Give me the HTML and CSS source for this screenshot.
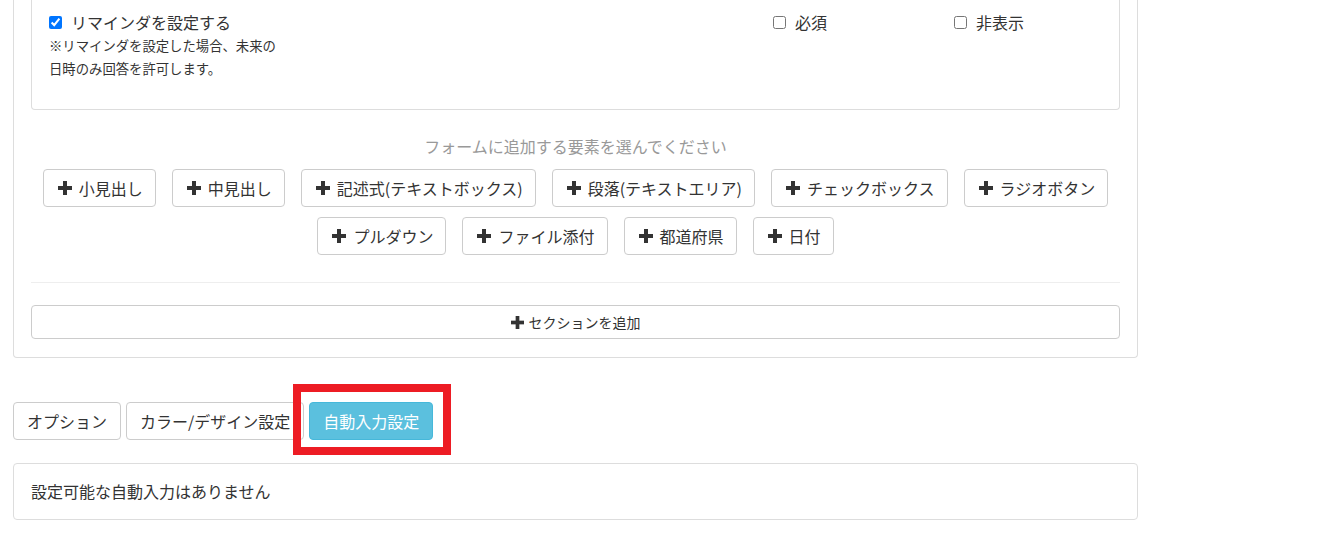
FILE: index.html
```html
<!DOCTYPE html>
<html lang="ja">
<head>
<meta charset="utf-8">
<title>フォーム編集</title>
<link rel="stylesheet" href="styles.css">
</head>
<body>
<div class="page">
  <div class="panel outer">
    <div class="outer-body">
      <div class="panel inner">
        <div class="inner-body">
          <div class="opt-row">
            <div class="opt-col">
              <label class="check"><input type="checkbox" checked><span class="lbl">リマインダを設定する</span></label>
              <p class="note">※リマインダを設定した場合、未来の<br>日時のみ回答を許可します。</p>
            </div>
            <div class="opt-col">
              <label class="check"><input type="checkbox"><span class="lbl">必須</span></label>
            </div>
            <div class="opt-col">
              <label class="check"><input type="checkbox"><span class="lbl">非表示</span></label>
            </div>
          </div>
        </div>
      </div>

      <p class="add-title">フォームに追加する要素を選んでください</p>
      <div class="add-buttons">
        <button class="btn add"><svg class="plus" viewBox="0 0 14 14"><rect x="5" y="0" width="4" height="14"/><rect x="0" y="5" width="14" height="4"/></svg>小見出し</button>
        <button class="btn add"><svg class="plus" viewBox="0 0 14 14"><rect x="5" y="0" width="4" height="14"/><rect x="0" y="5" width="14" height="4"/></svg>中見出し</button>
        <button class="btn add"><svg class="plus" viewBox="0 0 14 14"><rect x="5" y="0" width="4" height="14"/><rect x="0" y="5" width="14" height="4"/></svg>記述式(テキストボックス)</button>
        <button class="btn add"><svg class="plus" viewBox="0 0 14 14"><rect x="5" y="0" width="4" height="14"/><rect x="0" y="5" width="14" height="4"/></svg>段落(テキストエリア)</button>
        <button class="btn add"><svg class="plus" viewBox="0 0 14 14"><rect x="5" y="0" width="4" height="14"/><rect x="0" y="5" width="14" height="4"/></svg>チェックボックス</button>
        <button class="btn add"><svg class="plus" viewBox="0 0 14 14"><rect x="5" y="0" width="4" height="14"/><rect x="0" y="5" width="14" height="4"/></svg>ラジオボタン</button>
        <button class="btn add"><svg class="plus" viewBox="0 0 14 14"><rect x="5" y="0" width="4" height="14"/><rect x="0" y="5" width="14" height="4"/></svg>プルダウン</button>
        <button class="btn add"><svg class="plus" viewBox="0 0 14 14"><rect x="5" y="0" width="4" height="14"/><rect x="0" y="5" width="14" height="4"/></svg>ファイル添付</button>
        <button class="btn add"><svg class="plus" viewBox="0 0 14 14"><rect x="5" y="0" width="4" height="14"/><rect x="0" y="5" width="14" height="4"/></svg>都道府県</button>
        <button class="btn add"><svg class="plus" viewBox="0 0 14 14"><rect x="5" y="0" width="4" height="14"/><rect x="0" y="5" width="14" height="4"/></svg>日付</button>
      </div>

      <hr class="divider">

      <button class="btn btn-block"><svg class="plus small" viewBox="0 0 14 14"><rect x="5" y="0" width="4" height="14"/><rect x="0" y="5" width="14" height="4"/></svg>セクションを追加</button>
    </div>
  </div>

  <div class="tabs">
    <button class="btn tab">オプション</button>
    <button class="btn tab">カラー/デザイン設定</button>
    <span class="tab-wrap">
      <button class="btn tab active">自動入力設定</button>
      <span class="highlight"></span>
    </span>
  </div>

  <div class="panel result">
    <div class="result-body">設定可能な自動入力はありません</div>
  </div>
</div>
</body>
</html>
```

FILE: styles.css
```css
* { box-sizing: border-box; }

html, body {
  margin: 0;
  padding: 0;
  background: #fff;
}

body {
  font-family: "Noto Sans CJK JP", "Noto Sans", "Liberation Sans", sans-serif;
  color: #333;
  font-size: 16px;
  line-height: 1.42857;
}

.page {
  width: 1125px;
  margin-left: 13px;
}

.panel {
  border: 1px solid #ddd;
  border-radius: 4px;
  background: #fff;
}

.outer {
  border-top: none;
  border-top-left-radius: 0;
  border-top-right-radius: 0;
}

.outer-body {
  padding: 0 17px 18px 17px;
}

.inner {
  border-top: none;
  border-top-left-radius: 0;
  border-top-right-radius: 0;
}

.inner-body {
  padding: 11px 15px 29px 15px;
}

.opt-row {
  display: grid;
  grid-template-columns: 724px 181px 1fr;
}

.opt-col {
  padding-left: 2px;
}

.check {
  display: flex;
  align-items: center;
  height: 22px;
  font-size: 16px;
  line-height: 22px;
}

.check input {
  width: 13px;
  height: 13px;
  margin: 0 9px 0 0;
  accent-color: #0075ff;
}

.note {
  margin: 1px 0 0 0;
  font-size: 13.35px;
  line-height: 23px;
}

.add-title {
  margin: 25px 0 11px 0;
  text-align: center;
  color: #999;
  font-size: 16px;
  line-height: 23px;
}

.add-buttons {
  display: flex;
  flex-wrap: wrap;
  justify-content: center;
  column-gap: 16px;
  row-gap: 10px;
}

.btn {
  display: inline-flex;
  align-items: center;
  justify-content: center;
  font-family: inherit;
  font-size: 16px;
  line-height: 23px;
  color: #333;
  background: #fff;
  border: 1px solid #ccc;
  border-radius: 4px;
  padding: 6px 13px;
  height: 37px;
  cursor: pointer;
  white-space: nowrap;
}

.btn.add {
  padding: 6px 12px 6px 14px;
  height: 38px;
}

.plus {
  width: 14px;
  height: 14px;
  fill: #333;
  margin-right: 7px;
  flex: none;
}

.plus.small {
  width: 13px;
  height: 13px;
  margin-right: 5px;
}

.divider {
  border: none;
  border-top: 1px solid #eee;
  margin: 27px 0 22px 0;
}

.btn-block {
  display: flex;
  width: 100%;
  height: 34px;
  font-size: 14px;
  line-height: 20px;
  padding: 6px 12px;
}

.tabs {
  display: flex;
  gap: 5px;
  margin-top: 44px;
  align-items: center;
}

.tab {
  height: 38px;
}

.tab-wrap {
  position: relative;
  display: inline-flex;
}

.tab.active {
  background: #5bc0de;
  border-color: #46b8da;
  color: #fff;
}

.highlight {
  position: absolute;
  left: -16px;
  top: -18px;
  width: 158px;
  height: 71px;
  border: 8px solid #ed1c24;
  pointer-events: none;
}

.result {
  margin-top: 23px;
}

.result-body {
  padding: 16px 17px;
  font-size: 16px;
  line-height: 23px;
}
```
